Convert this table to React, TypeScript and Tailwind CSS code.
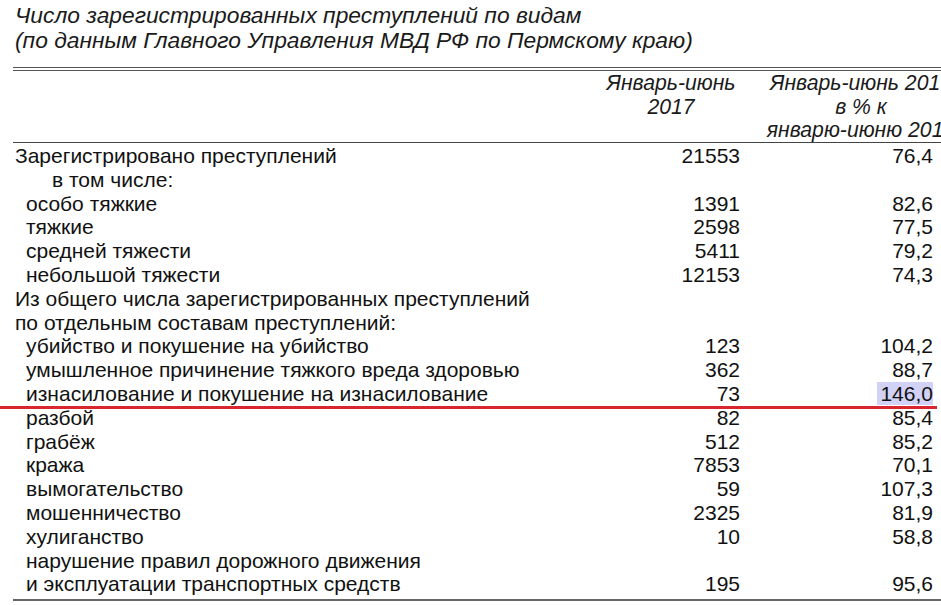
import React from "react";

interface Row {
  label: string;
  indent: 0 | 1 | 2;
  count?: string;
  percent?: string;
  mark?: boolean;
}

const rows: Row[] = [
  { label: "Зарегистрировано преступлений", indent: 0, count: "21553", percent: "76,4" },
  { label: "в том числе:", indent: 2 },
  { label: "особо тяжкие", indent: 1, count: "1391", percent: "82,6" },
  { label: "тяжкие", indent: 1, count: "2598", percent: "77,5" },
  { label: "средней тяжести", indent: 1, count: "5411", percent: "79,2" },
  { label: "небольшой тяжести", indent: 1, count: "12153", percent: "74,3" },
  { label: "Из общего числа зарегистрированных преступлений", indent: 0 },
  { label: "по отдельным составам преступлений:", indent: 0 },
  { label: "убийство и покушение на убийство", indent: 1, count: "123", percent: "104,2" },
  { label: "умышленное причинение тяжкого вреда здоровью", indent: 1, count: "362", percent: "88,7" },
  { label: "изнасилование и покушение на изнасилование", indent: 1, count: "73", percent: "146,0", mark: true },
  { label: "разбой", indent: 1, count: "82", percent: "85,4" },
  { label: "грабёж", indent: 1, count: "512", percent: "85,2" },
  { label: "кража", indent: 1, count: "7853", percent: "70,1" },
  { label: "вымогательство", indent: 1, count: "59", percent: "107,3" },
  { label: "мошенничество", indent: 1, count: "2325", percent: "81,9" },
  { label: "хулиганство", indent: 1, count: "10", percent: "58,8" },
  { label: "нарушение правил дорожного движения", indent: 1 },
  { label: "и эксплуатации транспортных средств", indent: 1, count: "195", percent: "95,6" },
];

const indentClass = {
  0: "pl-[15px]",
  1: "pl-[26px]",
  2: "pl-[52px]",
};

const App: React.FC = () => {
  return (
    <div className="w-[941px] h-[605px] overflow-hidden bg-white text-[#111] font-['Liberation_Sans',Arial,sans-serif]">
      {/* Title */}
      <div className="pl-[15px] pt-[3px] italic text-[22.8px] leading-[25px] text-[#1a1a1a] whitespace-nowrap">
        <div>Число зарегистрированных преступлений по видам</div>
        <div>(по данным Главного Управления МВД РФ по Пермскому краю)</div>
      </div>

      <div className="w-[956px]">
        {/* double rule */}
        <div className="mt-[14px] ml-[13px] h-[4px] border-y border-[#555]" />

        {/* Header */}
        <div className="ml-[13px] grid grid-cols-[563px_190px_190px] italic text-[21.2px] leading-[23.5px] text-[#1a1a1a] border-b border-[#444] pb-[0.5px]">
          <div />
          <div className="text-center">
            <div>Январь-июнь</div>
            <div>2017</div>
          </div>
          <div className="text-center whitespace-nowrap">
            <div>Январь-июнь 2017</div>
            <div>в % к</div>
            <div>январю-июню 2016</div>
          </div>
        </div>

        {/* Body */}
        <div className="relative text-[21px] leading-[23.8px] pt-[1px]">
          {rows.map((r, i) => (
            <div key={i} className="grid grid-cols-[576px_190px_184px] whitespace-nowrap">
              <div className={indentClass[r.indent]}>{r.label}</div>
              <div className="text-right pr-[26px]">{r.count}</div>
              <div className="text-right pr-[17px]">
                {r.mark ? <span className="bg-[#d2d2f6] pl-[3px]">{r.percent}</span> : r.percent}
              </div>
            </div>
          ))}
          {/* red annotation line */}
          <div className="absolute left-0 top-[263px] w-[937px] h-[2.5px] bg-[#d9252d]" />
        </div>

        {/* bottom rule */}
        <div className="mt-[3px] ml-[13px] h-[2px] bg-[#666]" />
      </div>
    </div>
  );
};

export default App;
